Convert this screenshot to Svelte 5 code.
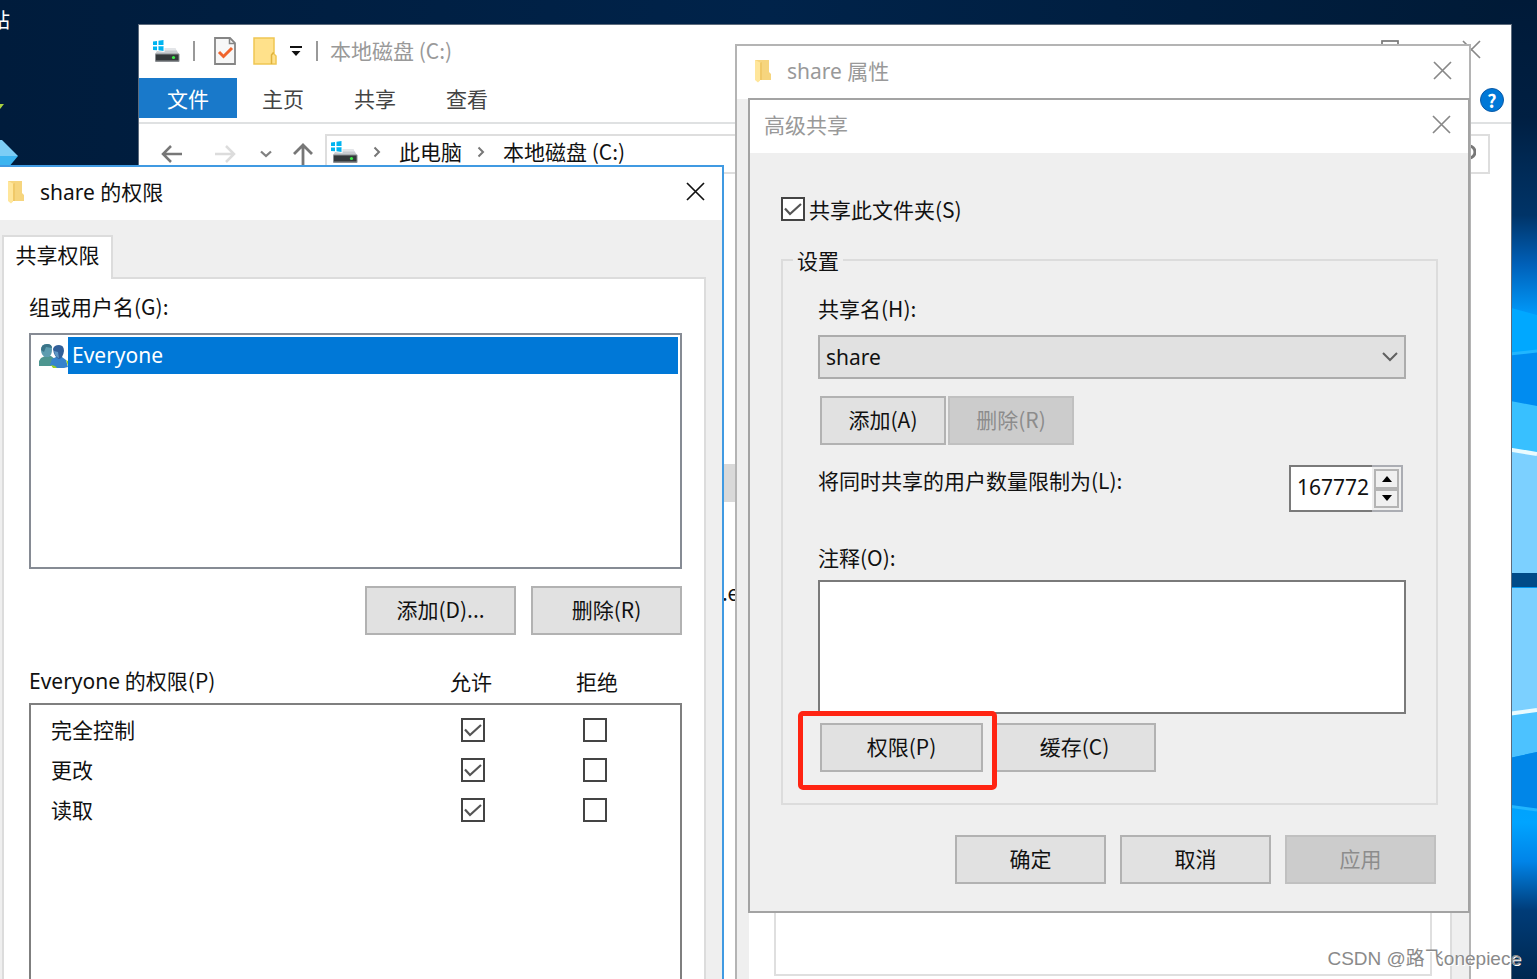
<script>
  let permissions = $state([
    { name: '完全控制', allow: true, deny: false },
    { name: '更改', allow: true, deny: false },
    { name: '读取', allow: true, deny: false },
  ]);

  let shareFolder = $state(true);
  let shareName = $state('share');
  let userLimit = $state('167772');
  let comment = $state('');

  const menuTabs = ['主页', '共享', '查看'];

  function stepLimit(delta) {
    userLimit = String(Math.max(1, Number(userLimit) + delta));
  }
</script>

{#snippet driveIcon()}
  <svg class="drive" width="28" height="24" viewBox="0 0 28 24" aria-hidden="true">
    <path fill="#00b4f0" d="M1 2.500l4-.5v4H1zM6.500 1.800L11.500 1v5h-5zM1 7.500h4v3.800l-4-.4zM6.500 7.500h5V12l-5-.7z" />
    <path fill="#c9ccd0" d="M7 9h16l4 6H3z" />
    <path fill="#e3e5e8" d="M12 9h11l1.500 2.500H12z" />
    <path fill="#fff" d="M5 8h7.500v5l-7.500-1z" />
    <path fill="#00b4f0" d="M6.500 7.500h5V12l-5-.7z" />
    <rect x="3" y="14.500" width="24.500" height="8.500" rx="1" fill="#8b8f93" />
    <rect x="4" y="15.500" width="22.500" height="6" fill="#34383b" />
    <circle cx="21.500" cy="18.500" r="1.600" fill="#3df04a" />
  </svg>
{/snippet}

{#snippet folderIcon()}
  <svg width="18" height="24" viewBox="0 0 18 24" aria-hidden="true">
    <path fill="#f6d57e" d="M1 1h14v12l2 2v6H1z" />
    <path fill="#ffe69b" d="M1 1l5 2.500v18L4 23.500 1 21z" />
    <path fill="#f0c968" d="M6 4l2-1v18H6z" />
  </svg>
{/snippet}

{#snippet crossIcon()}
  <svg width="19" height="19" viewBox="0 0 19 19" aria-hidden="true">
    <path d="M1 1l17 17M18 1L1 18" fill="none" stroke="currentColor" stroke-width="1.700" />
  </svg>
{/snippet}

{#snippet chevron()}
  <svg class="crumb-arrow" width="8" height="12" viewBox="0 0 8 12" aria-hidden="true">
    <path d="M1.500 1.500L6 6l-4.500 4.500" fill="none" stroke="#777" stroke-width="2" />
  </svg>
{/snippet}

<main class="desktop">
  <svg class="wallpaper" width="37" height="979" viewBox="0 0 37 979" aria-hidden="true">
    <defs>
      <linearGradient id="sky" x1="0" y1="0" x2="0" y2="1">
        <stop offset="0" stop-color="#001a38" />
        <stop offset=".12" stop-color="#001f42" />
        <stop offset=".22" stop-color="#003468" />
        <stop offset=".27" stop-color="#0060b8" />
        <stop offset=".32" stop-color="#0098f8" />
        <stop offset=".7" stop-color="#0098f0" />
        <stop offset=".84" stop-color="#00a4ff" />
        <stop offset=".88" stop-color="#0084e8" />
        <stop offset=".93" stop-color="#003c78" />
        <stop offset="1" stop-color="#002850" />
      </linearGradient>
    </defs>
    <rect width="37" height="979" fill="url(#sky)" />
    <path fill="#00a8ff" d="M0 305l37 10v36l-37 5z" />
    <path fill="#008cf0" d="M0 356l37-5v55l-37-6z" />
    <path fill="#38c0ff" d="M0 399l37 7v48l-37-6z" />
    <path fill="#7cd0ff" d="M0 448l37 6v119H0zM0 588h37v121l-37 5z" />
    <path fill="#4cc2ff" d="M0 714l37-5v43l-37 8z" />
    <path fill="#0086e8" d="M0 760l37-8v58l-37-5z" />
    <path fill="#004a88" d="M0 573h37v14H0z" />
    <path d="M0 448l37 6M0 715l37-5" stroke="#e9fbff" stroke-width="4" />
    <path d="M0 355l37-4M0 805l37 5" stroke="#21b6ff" stroke-width="3" />
  </svg>

  <span class="desktop-label">站</span>
  <svg class="desktop-icon" width="19" height="72" viewBox="0 0 19 72" aria-hidden="true">
    <path fill="#a8d040" d="M0 8h4l-4 5z" />
    <path fill="#7ccdf5" d="M0 44h2l16 16H0z" />
    <path fill="#3cb4f0" d="M0 60h18L8 72H0z" />
  </svg>

  <section class="window explorer">
    <header class="quick-bar">
      {@render driveIcon()}
      <i class="divider"></i>
      <svg class="props" width="22" height="28" viewBox="0 0 22 28" aria-hidden="true">
        <path d="M1 1h15l5 5v21H1z" fill="#f7f7f7" stroke="#858585" stroke-width="1.800" />
        <path d="M15.500 1v5.500H21" fill="none" stroke="#858585" stroke-width="1.500" />
        <path d="M5 15l4.500 4.500L18 11" fill="none" stroke="#f0642c" stroke-width="3" />
      </svg>
      <svg class="new-folder" width="24" height="28" viewBox="0 0 24 28" aria-hidden="true">
        <path d="M1 1h20v16l2 2v8H1z" fill="#ffe18b" stroke="#efc653" stroke-width="1.500" />
        <path d="M18.500 27v-9l1.500-2h1" fill="none" stroke="#dfb23c" stroke-width="1.500" />
      </svg>
      <svg class="customize" width="14" height="12" viewBox="0 0 14 12" aria-hidden="true">
        <path d="M1 1h12v2H1zM2.500 6h9L7 11z" fill="#111" />
      </svg>
      <i class="divider"></i>
      <span class="title">本地磁盘 (C:)</span>
      <div class="window-buttons">
        <svg width="19" height="19" viewBox="0 0 19 19" aria-hidden="true">
          <rect x="1" y="1" width="16" height="16" fill="none" stroke="#777" stroke-width="1.700" />
        </svg>
        {@render crossIcon()}
      </div>
    </header>

    <nav class="ribbon">
      <button class="file-tab">文件</button>
      {#each menuTabs as tab}
        <button class="menu-tab">{tab}</button>
      {/each}
      <button class="help" aria-label="帮助">?</button>
    </nav>

    <div class="address-row">
      <div class="nav-arrows">
        <svg width="22" height="20" viewBox="0 0 22 20" aria-hidden="true">
          <path d="M21 10H2M10 2l-8 8 8 8" fill="none" stroke="#777" stroke-width="2.500" />
        </svg>
        <svg class="forward" width="22" height="20" viewBox="0 0 22 20" aria-hidden="true">
          <path d="M1 10h19M12 2l8 8-8 8" fill="none" stroke="#dcdcdc" stroke-width="2.500" />
        </svg>
        <svg class="recent" width="12" height="8" viewBox="0 0 12 8" aria-hidden="true">
          <path d="M1 1.500L6 6l5-4.500" fill="none" stroke="#808080" stroke-width="2.300" />
        </svg>
        <svg class="up" width="22" height="22" viewBox="0 0 22 22" aria-hidden="true">
          <path d="M11 22V2M2 11l9-9 9 9" fill="none" stroke="#777" stroke-width="2.800" />
        </svg>
      </div>
      <div class="address">
        {@render driveIcon()}
        {@render chevron()}
        <span>此电脑</span>
        {@render chevron()}
        <span>本地磁盘 (C:)</span>
      </div>
      <div class="search">
        <svg width="20" height="20" viewBox="0 0 20 20" aria-hidden="true">
          <circle cx="13" cy="8" r="6" fill="none" stroke="#777" stroke-width="3" />
          <path d="M9 12l-7 7" stroke="#777" stroke-width="3" />
        </svg>
      </div>
    </div>

    <div class="files">
      <div class="file-row selected"></div>
      <div class="file-row name">.e</div>
    </div>
  </section>

  <section class="window properties">
    <header class="title-bar inactive">
      {@render folderIcon()}
      <h2>share 属性</h2>
      <button class="close" aria-label="关闭">{@render crossIcon()}</button>
    </header>
    <div class="properties-page">
      <div class="properties-group"></div>
    </div>
  </section>

  <section class="window advanced">
    <header class="title-bar inactive">
      <h2>高级共享</h2>
      <button class="close" aria-label="关闭">{@render crossIcon()}</button>
    </header>

    <div class="advanced-body">
      <label class="share-toggle">
        <input type="checkbox" bind:checked={shareFolder} />
        共享此文件夹(S)
      </label>

      <fieldset>
        <legend>设置</legend>

        <label for="share-name">共享名(H):</label>
        <div class="select-wrap">
          <select id="share-name" bind:value={shareName}>
            <option value="share">share</option>
          </select>
          <svg width="16" height="10" viewBox="0 0 16 10" aria-hidden="true">
            <path d="M1 1l7 7 7-7" fill="none" stroke="#606060" stroke-width="2" />
          </svg>
        </div>

        <div class="name-actions">
          <button class="btn">添加(A)</button>
          <button class="btn" disabled>删除(R)</button>
        </div>

        <div class="limit-row">
          <label for="user-limit">将同时共享的用户数量限制为(L):</label>
          <div class="spinner">
            <input id="user-limit" type="text" bind:value={userLimit} />
            <div class="spinner-buttons">
              <button aria-label="增加" onclick={() => stepLimit(1)}>
                <svg width="10" height="6" viewBox="0 0 10 6"><path d="M0 6l5-6 5 6z" /></svg>
              </button>
              <button aria-label="减少" onclick={() => stepLimit(-1)}>
                <svg width="10" height="6" viewBox="0 0 10 6"><path d="M0 0l5 6 5-6z" /></svg>
              </button>
            </div>
          </div>
        </div>

        <label for="comment">注释(O):</label>
        <textarea id="comment" bind:value={comment}></textarea>

        <div class="share-actions">
          <div class="marked">
            <button class="btn">权限(P)</button>
          </div>
          <button class="btn">缓存(C)</button>
        </div>
      </fieldset>

      <footer>
        <button class="btn">确定</button>
        <button class="btn">取消</button>
        <button class="btn" disabled>应用</button>
      </footer>
    </div>
  </section>

  <section class="window permissions">
    <header class="title-bar">
      {@render folderIcon()}
      <h2>share 的权限</h2>
      <button class="close" aria-label="关闭">{@render crossIcon()}</button>
    </header>

    <div class="permissions-body">
      <button class="page-tab">共享权限</button>
      <div class="page">
        <div class="label" id="group-label">组或用户名(G):</div>
        <ul class="groups" aria-labelledby="group-label">
          <li>
            <svg width="30" height="26" viewBox="0 0 30 26" aria-hidden="true">
              <path fill="#4d9690" d="M1 23v-5l2-3 4-2h6l4 3v7z" />
              <path fill="#5d9db0" d="M3 7q0-6 6-6 5 0 5 5 0 6-3 8H7q-4-2-4-7z" />
              <path fill="#3a7488" d="M3 7q0-6 6-6 5 0 5 4l-6-1-2 5z" />
              <path fill="#3583cc" d="M12 22l2-6 4-2h6l4 3 2 7-4 1h-9z" />
              <path fill="#315f99" d="M15 6q1-4 6-4 5 0 5 6-1 7-5 8-5-2-6-10z" />
              <path fill="#5f97c5" d="M16 8l4 1 1 6q-4-1-5-7z" />
              <path fill="#9bd224" d="M13 22l4 1 2 2h-4zM28 17l2 1v5z" />
            </svg>
            <span>Everyone</span>
          </li>
        </ul>

        <div class="group-actions">
          <button class="btn">添加(D)...</button>
          <button class="btn">删除(R)</button>
        </div>

        <table>
          <thead>
            <tr>
              <th><span class="latin">Everyone</span> 的权限(P)</th>
              <th>允许</th>
              <th>拒绝</th>
            </tr>
          </thead>
          <tbody>
            {#each permissions as permission}
              <tr>
                <td>{permission.name}</td>
                <td><input type="checkbox" aria-label="允许{permission.name}" bind:checked={permission.allow} /></td>
                <td><input type="checkbox" aria-label="拒绝{permission.name}" bind:checked={permission.deny} /></td>
              </tr>
            {/each}
          </tbody>
        </table>
      </div>
    </div>
  </section>

  <span class="watermark">CSDN @路飞onepiece</span>
</main>

<style>
  :global(body) {
    margin: 0;
  }

  .desktop {
    position: relative;
    min-height: 100vh;
    overflow: hidden;
    background: linear-gradient(90deg, #001c3c, #00234a 50%, #001a36);
    font-family: 'Noto Sans CJK SC', sans-serif;
    font-size: 21px;
    line-height: 28px;
    color: #111;
  }

  .desktop *,
  .desktop {
    box-sizing: border-box;
  }

  svg {
    display: block;
    flex: none;
  }

  button,
  input,
  select,
  textarea {
    font: inherit;
    color: inherit;
    margin: 0;
    border-radius: 0;
  }

  button {
    padding: 0;
    border: none;
    background: none;
  }

  .wallpaper {
    position: absolute;
    top: 0;
    right: 0;
  }

  .desktop-label {
    position: absolute;
    top: 6px;
    left: -10px;
    font-size: 20px;
    color: #fff;
  }

  .desktop-icon {
    position: absolute;
    top: 96px;
    left: 0;
  }

  .window {
    position: absolute;
    display: flex;
    flex-direction: column;
  }

  /* explorer */
  .explorer {
    top: 24px;
    left: 138px;
    right: 25px;
    bottom: -40px;
    background: #fff;
    border: 1px solid #5d6b7c;
  }

  .quick-bar {
    display: flex;
    align-items: center;
    height: 53px;
    padding: 0 30px 2px 13px;
  }

  .divider {
    width: 2px;
    height: 20px;
    margin-left: 13px;
    background: #999;
  }

  .props {
    margin-left: 19px;
  }

  .new-folder {
    margin-left: 17px;
  }

  .customize {
    margin-left: 12px;
  }

  .title {
    margin-left: 12px;
    padding-bottom: 2px;
    color: #999;
  }

  .window-buttons {
    display: flex;
    gap: 62px;
    margin-left: auto;
    padding-bottom: 2px;
    color: #888;
  }

  .ribbon {
    display: flex;
    align-items: center;
    height: 46px;
    padding-bottom: 5px;
    border-bottom: 2px solid #dfe1e2;
  }

  .file-tab {
    width: 98px;
    height: 40px;
    background: #1979ca;
    color: #fff;
  }

  .menu-tab {
    width: 92px;
    height: 40px;
    color: #444;
  }

  .help {
    width: 24px;
    height: 24px;
    margin: 5px 7px 0 auto;
    border: 1px solid #0a5aa8;
    border-radius: 50%;
    background: #0078d7;
    color: #fff;
    font-size: 18px;
    font-weight: 700;
    line-height: 22px;
  }

  .address-row {
    display: flex;
    gap: 12px;
    padding: 10px 21px 0 22px;
  }

  .nav-arrows {
    display: flex;
    align-items: center;
    width: 152px;
  }

  .forward {
    margin-left: 31px;
  }

  .recent {
    margin-left: 24px;
  }

  .up {
    margin-left: 20px;
  }

  .address {
    display: flex;
    flex: 1;
    align-items: center;
    height: 40px;
    padding: 0 3px 4px;
    border: 2px solid #dedede;
  }

  .address span {
    padding-bottom: 2px;
  }

  .crumb-arrow {
    margin: 0 18px 0 15px;
  }

  .search {
    display: flex;
    align-items: center;
    width: 300px;
    height: 40px;
    padding-left: 264px;
    border: 2px solid #dedede;
  }

  .files {
    margin-top: 290px;
  }

  .file-row {
    width: 50%;
    height: 38px;
    padding-left: 583px;
  }

  .file-row.selected {
    background: #d9d9d9;
    margin-bottom: 76px;
  }

  /* dialogs */
  .title-bar {
    display: flex;
    align-items: center;
    height: 53px;
    background: #fff;
    font-family: 'Noto Sans', 'Noto Sans CJK SC', sans-serif;
  }

  .title-bar h2 {
    margin: 0;
    font-size: 21px;
    font-weight: 400;
  }

  .title-bar.inactive {
    color: #999;
  }

  .title-bar.inactive .close {
    color: #888;
  }

  .close {
    margin-left: auto;
  }

  .btn {
    width: 151px;
    height: 49px;
    padding-bottom: 4px;
    border: 2px solid #b2b2b2;
    background: #e1e1e1;
  }

  .btn:disabled {
    border-color: #c0c0c0;
    background: #cccccc;
    color: #8c8c8c;
  }

  input[type='checkbox'] {
    appearance: none;
    display: block;
    width: 24px;
    height: 24px;
    border: 2px solid #444;
    background: #fff;
  }

  input[type='checkbox']:checked {
    background: #fff url("data:image/svg+xml,%3Csvg xmlns='http://www.w3.org/2000/svg' viewBox='0 0 20 20'%3E%3Cpath d='M2 9.500l5 5.500L18 5' fill='none' stroke='%23555' stroke-width='2.200'/%3E%3C/svg%3E") center / 20px 20px no-repeat;
  }

  .properties {
    top: 44px;
    left: 735px;
    width: 736px;
    bottom: -40px;
    padding-right: 17px;
    background: #efefef;
    border: 2px solid #b4b4b4;
  }

  .properties .title-bar {
    flex: none;
    margin-right: -17px;
    padding: 0 17px 4px;
    gap: 15px;
  }

  .properties-page {
    display: flex;
    flex-direction: column;
    flex: 1;
    margin-left: 12px;
    padding: 0 18px 41px 25px;
    background: #fff;
    border-right: 2px solid #dcdcdc;
  }

  .properties-group {
    flex: 1;
    border: 2px solid #dfdfdf;
  }

  .advanced {
    top: 98px;
    left: 748px;
    width: 722px;
    background: #efefef;
    border: 2px solid #a3a3a3;
  }

  .advanced .title-bar {
    padding: 0 17px 4px 14px;
  }

  .advanced-body {
    padding: 42px 30px 27px 31px;
  }

  .share-toggle {
    display: flex;
    align-items: center;
    gap: 4px;
    margin-bottom: 23px;
  }

  fieldset {
    margin: 0;
    padding: 20px 30px 31px 35px;
    border: 2px solid #dcdcdc;
  }

  legend {
    margin-left: -25px;
    padding: 0 4px;
  }

  fieldset > label {
    display: block;
  }

  .select-wrap {
    position: relative;
    margin-top: 13px;
  }

  select {
    display: block;
    appearance: none;
    width: 100%;
    height: 44px;
    padding: 0 6px;
    border: 2px solid #acacac;
    background: #e1e1e1;
    font-family: 'Noto Sans', sans-serif;
  }

  .select-wrap svg {
    position: absolute;
    top: 17px;
    right: 8px;
  }

  .name-actions {
    display: flex;
    gap: 2px;
    margin: 17px 2px 20px;
  }

  .name-actions .btn {
    width: 126px;
  }

  .limit-row {
    display: flex;
    justify-content: space-between;
    padding-right: 3px;
    margin-bottom: 31px;
  }

  .limit-row label {
    padding-top: 1px;
  }

  .spinner {
    display: flex;
    width: 114px;
    height: 47px;
  }

  .spinner input {
    width: 83px;
    padding: 0 0 4px 6px;
    border: 2px solid #7a7a7a;
    border-right: none;
    background: #fff;
    font-family: 'Noto Sans', sans-serif;
  }

  .spinner-buttons {
    display: flex;
    flex: 1;
    flex-direction: column;
    padding: 2px;
    border: 2px solid #abadb3;
    border-left: none;
  }

  .spinner-buttons button {
    display: flex;
    flex: 1;
    align-items: center;
    justify-content: center;
    border: 2px solid #b4b4b4;
    background: #f0f0f0;
  }

  textarea {
    display: block;
    width: 100%;
    height: 134px;
    margin-top: 9px;
    border: 2px solid #7a7a7a;
    background: #fff;
    resize: none;
  }

  .share-actions {
    display: flex;
    gap: 10px;
    margin: 9px 2px 0;
  }

  .share-actions .btn {
    display: block;
    width: 163px;
  }

  .marked {
    position: relative;
  }

  .marked::after {
    content: '';
    position: absolute;
    inset: -12px -14px -18px -22px;
    border: 5px solid #ff2412;
    border-radius: 5px;
    pointer-events: none;
  }

  footer {
    display: flex;
    justify-content: flex-end;
    gap: 14px;
    margin-top: 30px;
    padding-right: 2px;
  }

  .permissions {
    top: 165px;
    left: -16px;
    width: 740px;
    bottom: -40px;
    background: #efefef;
    border: 2px solid #409ae2;
  }

  .permissions .title-bar {
    flex: none;
    gap: 15px;
    padding: 0 17px 4px 21px;
    color: #111;
  }

  .permissions-body {
    display: flex;
    flex: 1;
    flex-direction: column;
    padding: 15px 16px 17px;
  }

  .page-tab {
    position: relative;
    z-index: 1;
    width: 111px;
    height: 44px;
    margin-bottom: -2px;
    padding-bottom: 8px;
    border: 2px solid #dcdcdc;
    border-bottom: none;
    background: #fff;
  }

  .page {
    display: flex;
    flex: 1;
    flex-direction: column;
    padding: 13px 22px 0 25px;
    border: 2px solid #dcdcdc;
    background: #fff;
  }

  .groups {
    height: 236px;
    margin: 13px 0 17px;
    padding: 2px 2px 2px 7px;
    border: 2px solid #868b94;
    list-style: none;
  }

  .groups li {
    display: flex;
    align-items: center;
    color: #fff;
    font-family: 'Noto Sans', sans-serif;
  }

  .groups span {
    flex: 1;
    height: 37px;
    padding: 4px;
    background: #0078d7;
  }

  .group-actions {
    display: flex;
    justify-content: flex-end;
    gap: 15px;
  }

  .latin {
    font-family: 'Noto Sans', sans-serif;
  }

  table {
    display: flex;
    flex: 1;
    flex-direction: column;
    margin-top: 31px;
  }

  tr {
    display: grid;
    grid-template-columns: 1fr 122px 122px;
    align-items: center;
    padding-right: 24px;
  }

  thead tr {
    grid-template-columns: 1fr 130px 122px;
    height: 37px;
    padding-bottom: 8px;
  }

  th,
  td {
    padding: 0;
    text-align: center;
    font-weight: 400;
  }

  th:first-child,
  td:first-child {
    text-align: left;
  }

  tbody {
    display: block;
    flex: 1;
    padding-top: 5px;
    border: 2px solid #7f7f7f;
  }

  tbody tr {
    height: 40px;
    padding-left: 20px;
  }

  td:first-child {
    padding-bottom: 2px;
  }

  td input {
    margin: 0 auto;
  }

  .watermark {
    position: absolute;
    right: 16px;
    bottom: 6px;
    color: #8a8a8a;
    font-family: 'Liberation Sans', 'Noto Sans CJK SC', sans-serif;
    font-size: 19px;
    text-shadow: 1px 1px 0 #fff;
  }
</style>
